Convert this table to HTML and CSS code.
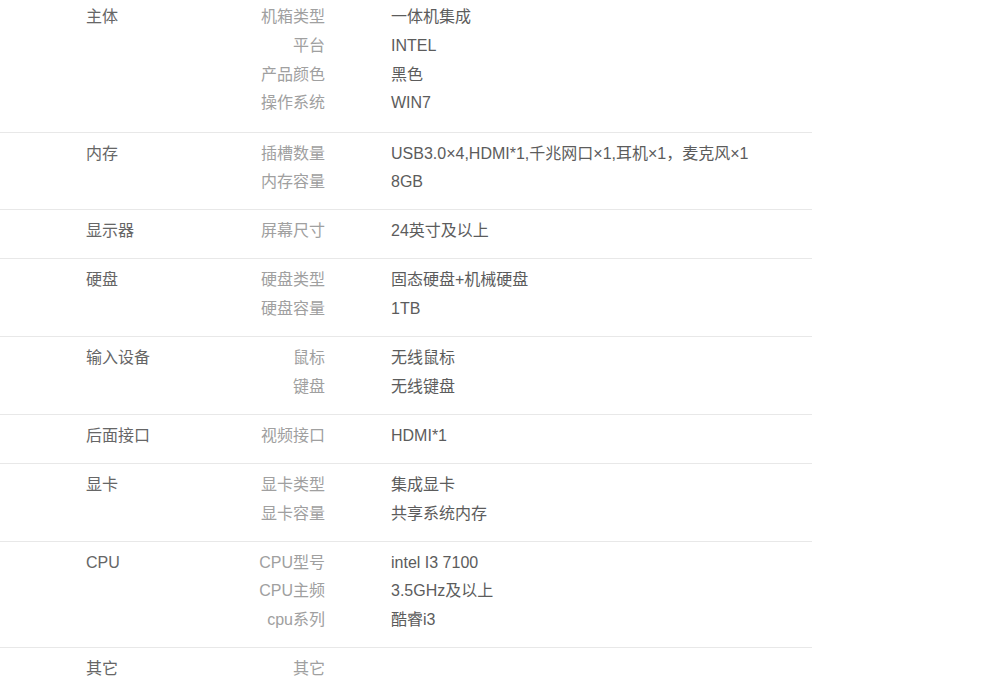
FILE: index.html
```html
<html>
<head>
    <meta charset="utf-8">
    <link rel="stylesheet" href="styles.css">
</head>
<body>
<div class='spec'>
    <div class='group first'>
        <div class='name'>主体</div>
        <div class='items'>
            <div class='item'><span class='label'>机箱类型</span><span class='value'>一体机集成</span></div>
            <div class='item'><span class='label'>平台</span><span class='value'>INTEL</span></div>
            <div class='item'><span class='label'>产品颜色</span><span class='value'>黑色</span></div>
            <div class='item'><span class='label'>操作系统</span><span class='value'>WIN7</span></div>
        </div>
    </div>
    <div class='group'>
        <div class='name'>内存</div>
        <div class='items'>
            <div class='item'><span class='label'>插槽数量</span><span class='value'>USB3.0×4,HDMI*1,千兆网口×1,耳机×1，麦克风×1</span></div>
            <div class='item'><span class='label'>内存容量</span><span class='value'>8GB</span></div>
        </div>
    </div>
    <div class='group'>
        <div class='name'>显示器</div>
        <div class='items'>
            <div class='item'><span class='label'>屏幕尺寸</span><span class='value'>24英寸及以上</span></div>
        </div>
    </div>
    <div class='group'>
        <div class='name'>硬盘</div>
        <div class='items'>
            <div class='item'><span class='label'>硬盘类型</span><span class='value'>固态硬盘+机械硬盘</span></div>
            <div class='item'><span class='label'>硬盘容量</span><span class='value'>1TB</span></div>
        </div>
    </div>
    <div class='group'>
        <div class='name'>输入设备</div>
        <div class='items'>
            <div class='item'><span class='label'>鼠标</span><span class='value'>无线鼠标</span></div>
            <div class='item'><span class='label'>键盘</span><span class='value'>无线键盘</span></div>
        </div>
    </div>
    <div class='group'>
        <div class='name'>后面接口</div>
        <div class='items'>
            <div class='item'><span class='label'>视频接口</span><span class='value'>HDMI*1</span></div>
        </div>
    </div>
    <div class='group'>
        <div class='name'>显卡</div>
        <div class='items'>
            <div class='item'><span class='label'>显卡类型</span><span class='value'>集成显卡</span></div>
            <div class='item'><span class='label'>显卡容量</span><span class='value'>共享系统内存</span></div>
        </div>
    </div>
    <div class='group'>
        <div class='name'>CPU</div>
        <div class='items'>
            <div class='item'><span class='label'>CPU型号</span><span class='value'>intel I3 7100</span></div>
            <div class='item'><span class='label'>CPU主频</span><span class='value'>3.5GHz及以上</span></div>
            <div class='item'><span class='label'>cpu系列</span><span class='value'>酷睿i3</span></div>
        </div>
    </div>
    <div class='group'>
        <div class='name'>其它</div>
        <div class='items'>
            <div class='item'><span class='label'>其它</span><span class='value'></span></div>
        </div>
    </div>
</div>
</body>
</html>
```

FILE: styles.css
```css
body {
    margin: 0;
    background: #fff;
    font-family: "Liberation Sans", "Noto Sans CJK SC", sans-serif;
    font-size: 16px;
    color: #666;
}

.spec {
    width: 812px;
}

.group {
    display: flex;
    padding: 7px 0 12.2px 86px;
    border-top: 1px solid #e8e8e8;
}

.group.first {
    border-top: none;
    padding-top: 3px;
    padding-bottom: 13.4px;
}

.name {
    width: 120px;
    line-height: 28.8px;
    color: #666;
}

.items {
    display: flex;
    flex-direction: column;
}

.item {
    display: flex;
    line-height: 28.8px;
    height: 28.8px;
}

.label {
    width: 119px;
    text-align: right;
    color: #a0a0a0;
}

.value {
    margin-left: 66px;
    color: #5c5c5c;
}
```
